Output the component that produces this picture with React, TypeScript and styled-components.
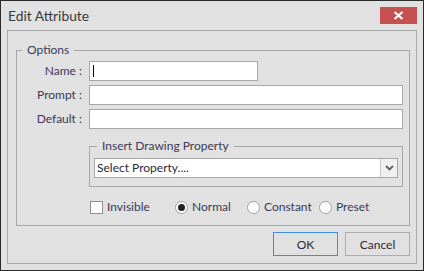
import React from "react";
import styled, { createGlobalStyle } from "styled-components";

const Global = createGlobalStyle`
  html, body { margin: 0; padding: 0; background: #e1e1e1; }
  body { font-family: Lato, "Noto Sans", sans-serif; font-size: 12px; color: #3a3a58; }
  * { box-sizing: border-box; }
`;

const Window = styled.div`
  width: 424px;
  height: 271px;
  border: 1px solid #2b2b2b;
  background: #e1e1e1;
  display: flex;
  flex-direction: column;
`;

const TitleBar = styled.div`
  height: 29px;
  display: flex;
  align-items: flex-start;
  justify-content: space-between;
  padding: 0 6px 0 7px;
`;

const Title = styled.div`
  font-size: 13.8px;
  color: #3a3a3a;
  margin-top: 6px;
  line-height: 18px;
`;

const CloseButton = styled.div`
  width: 37px;
  height: 17px;
  margin-top: 6px;
  background: #c75050;
  display: flex;
  align-items: center;
  justify-content: center;
`;

const Panel = styled.div`
  flex: 1;
  margin: 0 6px 6px 6px;
  border: 1px solid #a8a8a8;
  display: flex;
  flex-direction: column;
`;

const Group = styled.fieldset<{ $ml: number; $mr: number; $mt: number; $pt: number; $pb: number; $pl: number; $pr: number }>`
  margin: ${(p) => p.$mt}px ${(p) => p.$mr}px 0 ${(p) => p.$ml}px;
  padding: ${(p) => p.$pt}px ${(p) => p.$pr}px ${(p) => p.$pb}px ${(p) => p.$pl}px;
  border: 1px solid #a8a8a8;
  min-width: 0;
`;

const Legend = styled.legend<{ $ml: number }>`
  margin-left: ${(p) => p.$ml}px;
  padding: 0 5px;
  line-height: 16px;
  font-size: 12px;
  color: #3a3a58;
`;

const FormGrid = styled.div`
  display: grid;
  grid-template-columns: 65px 1fr;
  column-gap: 7px;
  row-gap: 4px;
  align-items: center;
`;

const Label = styled.label`
  text-align: right;
  line-height: 20px;
  color: #3a3a58;
  white-space: nowrap;
`;

const TextBox = styled.div<{ $w?: number }>`
  height: 20px;
  width: ${(p) => (p.$w ? `${p.$w}px` : "100%")};
  background: #fff;
  border: 1px solid #a8a8a8;
  position: relative;
`;

const Caret = styled.div`
  position: absolute;
  left: 3px;
  top: 3px;
  width: 1px;
  height: 12px;
  background: #000;
`;

const Full = styled.div<{ $mt: number }>`
  grid-column: 2;
  margin-top: ${(p) => p.$mt}px;
`;

const Select = styled.div`
  height: 20px;
  background: #fff;
  border: 1px solid #a8a8a8;
  display: flex;
  align-items: center;
`;

const SelectText = styled.div`
  flex: 1;
  padding-left: 2px;
  color: #2a2a3a;
  line-height: 18px;
`;

const SelectArrow = styled.div`
  width: 17px;
  height: 18px;
  border-left: 1px solid #c8c8c8;
  background: #f0f0f0;
  display: flex;
  align-items: center;
  justify-content: center;
`;

const OptionRow = styled.div`
  display: flex;
  align-items: center;
  height: 16px;
  margin-top: 8px;
  padding-left: 1px;
`;

const Option = styled.div<{ $w?: number }>`
  display: flex;
  align-items: center;
  gap: 4px;
  width: ${(p) => (p.$w ? `${p.$w}px` : "auto")};
  line-height: 16px;
  color: #3a3a58;
`;

const CheckBox = styled.div`
  width: 13px;
  height: 13px;
  background: #fff;
  border: 1px solid #8f8f8f;
`;

const Radio = styled.div<{ $on?: boolean }>`
  width: 13px;
  height: 13px;
  border-radius: 50%;
  background: #fff;
  border: 1px solid #a0a0a0;
  display: flex;
  align-items: center;
  justify-content: center;
  &::after {
    content: "";
    display: ${(p) => (p.$on ? "block" : "none")};
    width: 7px;
    height: 7px;
    border-radius: 50%;
    background: #222;
  }
`;

const ButtonRow = styled.div`
  display: flex;
  justify-content: flex-end;
  gap: 7px;
  margin: 6px 6px 0 0;
`;

const Button = styled.div<{ $primary?: boolean }>`
  width: 65px;
  height: 24px;
  border: 1px solid ${(p) => (p.$primary ? "#3c8fe0" : "#adadad")};
  background: #e1e1e1;
  display: flex;
  align-items: center;
  justify-content: center;
  color: #2a2a3a;
`;

export default function App() {
  return (
    <>
      <Global />
      <Window>
        <TitleBar>
          <Title>Edit Attribute</Title>
          <CloseButton>
            <svg width="11" height="9" viewBox="0 0 11 9">
              <path d="M1.5 1 L9.5 8 M9.5 1 L1.5 8" stroke="#fff" strokeWidth="2.2" />
            </svg>
          </CloseButton>
        </TitleBar>
        <Panel>
          <Group $ml={8} $mr={6} $mt={11} $pt={3} $pb={10} $pl={0} $pr={6}>
            <Legend $ml={5}>Options</Legend>
            <FormGrid>
              <Label>Name :</Label>
              <TextBox $w={169}>
                <Caret />
              </TextBox>
              <Label>Prompt :</Label>
              <TextBox />
              <Label>Default :</Label>
              <TextBox />
              <Full $mt={5}>
                <Group $ml={0} $mr={0} $mt={0} $pt={4} $pb={8} $pl={4} $pr={4}>
                  <Legend $ml={3}>Insert Drawing Property</Legend>
                  <Select>
                    <SelectText>Select Property....</SelectText>
                    <SelectArrow>
                      <svg width="9" height="6" viewBox="0 0 9 6">
                        <path d="M1 1 L4.5 4.5 L8 1" stroke="#606060" strokeWidth="1.8" fill="none" />
                      </svg>
                    </SelectArrow>
                  </Select>
                </Group>
              </Full>
              <Full $mt={0}>
                <OptionRow>
                  <Option $w={85}>
                    <CheckBox />
                    <span>Invisible</span>
                  </Option>
                  <Option $w={72}>
                    <Radio $on />
                    <span>Normal</span>
                  </Option>
                  <Option $w={72}>
                    <Radio />
                    <span>Constant</span>
                  </Option>
                  <Option>
                    <Radio />
                    <span>Preset</span>
                  </Option>
                </OptionRow>
              </Full>
            </FormGrid>
          </Group>
          <ButtonRow>
            <Button $primary>OK</Button>
            <Button>Cancel</Button>
          </ButtonRow>
        </Panel>
      </Window>
    </>
  );
}
